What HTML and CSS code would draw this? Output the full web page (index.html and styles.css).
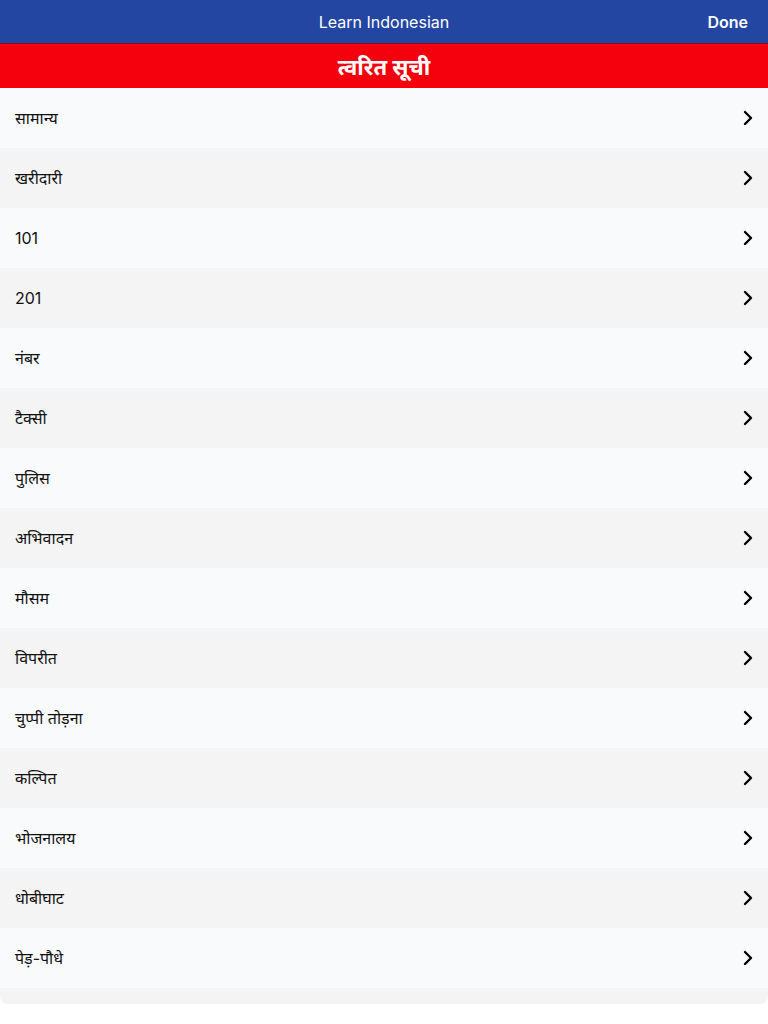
FILE: index.html
```html
<!DOCTYPE html>
<html lang="hi">
<head>
<meta charset="utf-8">
<title>Learn Indonesian</title>
<link rel="stylesheet" href="styles.css">
</head>
<body>
<header class="navbar">
  <div class="nav-title">Learn Indonesian</div>
  <div class="nav-done">Done</div>
</header>
<div class="section-title">त्वरित सूची</div>
<ul class="list">
  <li class="row"><span class="label">सामान्य</span><svg class="chev" viewBox="0 0 10 16"><path d="M2 2l6 6-6 6"/></svg></li>
  <li class="row"><span class="label">खरीदारी</span><svg class="chev" viewBox="0 0 10 16"><path d="M2 2l6 6-6 6"/></svg></li>
  <li class="row"><span class="label">101</span><svg class="chev" viewBox="0 0 10 16"><path d="M2 2l6 6-6 6"/></svg></li>
  <li class="row"><span class="label">201</span><svg class="chev" viewBox="0 0 10 16"><path d="M2 2l6 6-6 6"/></svg></li>
  <li class="row"><span class="label">नंबर</span><svg class="chev" viewBox="0 0 10 16"><path d="M2 2l6 6-6 6"/></svg></li>
  <li class="row"><span class="label">टैक्सी</span><svg class="chev" viewBox="0 0 10 16"><path d="M2 2l6 6-6 6"/></svg></li>
  <li class="row"><span class="label">पुलिस</span><svg class="chev" viewBox="0 0 10 16"><path d="M2 2l6 6-6 6"/></svg></li>
  <li class="row"><span class="label">अभिवादन</span><svg class="chev" viewBox="0 0 10 16"><path d="M2 2l6 6-6 6"/></svg></li>
  <li class="row"><span class="label">मौसम</span><svg class="chev" viewBox="0 0 10 16"><path d="M2 2l6 6-6 6"/></svg></li>
  <li class="row"><span class="label">विपरीत</span><svg class="chev" viewBox="0 0 10 16"><path d="M2 2l6 6-6 6"/></svg></li>
  <li class="row"><span class="label">चुप्पी तोड़ना</span><svg class="chev" viewBox="0 0 10 16"><path d="M2 2l6 6-6 6"/></svg></li>
  <li class="row"><span class="label">कल्पित</span><svg class="chev" viewBox="0 0 10 16"><path d="M2 2l6 6-6 6"/></svg></li>
  <li class="row"><span class="label">भोजनालय</span><svg class="chev" viewBox="0 0 10 16"><path d="M2 2l6 6-6 6"/></svg></li>
  <li class="row"><span class="label">धोबीघाट</span><svg class="chev" viewBox="0 0 10 16"><path d="M2 2l6 6-6 6"/></svg></li>
  <li class="row"><span class="label">पेड़-पौधे</span><svg class="chev" viewBox="0 0 10 16"><path d="M2 2l6 6-6 6"/></svg></li>
</ul>
<div class="list-end"></div>
</body>
</html>
```
FILE: styles.css
```css
* { box-sizing: border-box; }
html, body {
  margin: 0;
  padding: 0;
  background: #ffffff;
  font-family: "Inter", "Noto Sans", "Liberation Sans", sans-serif;
}
.navbar {
  height: 44px;
  background: #2446a3;
  border-bottom: 1px solid #7a1020;
  display: flex;
  align-items: center;
  justify-content: center;
  position: relative;
  color: #ffffff;
}
.nav-title {
  font-size: 16px;
}
.nav-done {
  position: absolute;
  right: 20px;
  top: 0;
  height: 44px;
  display: flex;
  align-items: center;
  font-weight: 600;
  font-size: 16px;
}
.section-title {
  height: 44px;
  background: #f5000d;
  color: #ffffff;
  font-weight: 700;
  font-size: 22px;
  display: flex;
  align-items: center;
  justify-content: center;
}
.list {
  list-style: none;
  margin: 0;
  padding: 0;
}
.row {
  height: 60px;
  display: flex;
  align-items: center;
  justify-content: space-between;
  padding: 0 15px 0 15px;
  background: #f9fafb;
  color: #111111;
  font-size: 16px;
}
.row:nth-child(even) {
  background: #f4f4f4;
}
.chev {
  width: 10px;
  height: 16px;
  fill: none;
  stroke: #000000;
  stroke-width: 2.4;
  stroke-linecap: round;
  stroke-linejoin: round;
}
.list-end {
  height: 16px;
  background: #f4f4f4;
  border-radius: 0 0 8px 8px;
}
```
